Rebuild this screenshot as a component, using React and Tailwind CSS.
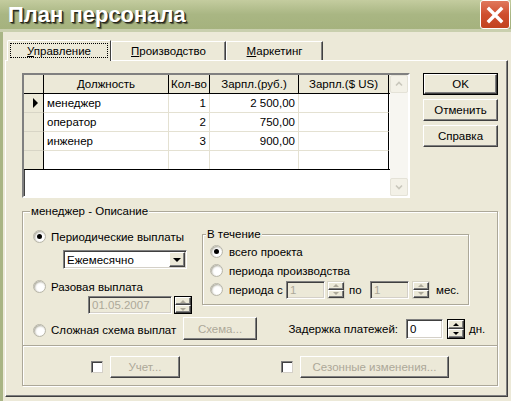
import React from "react";

const raised =
  "border border-t-white border-l-white border-r-[#404040] border-b-[#404040] shadow-[inset_-1px_-1px_0_#808080]";
const sunken =
  "border border-t-[#808080] border-l-[#808080] border-b-white border-r-white shadow-[inset_1px_1px_0_#404040,inset_-1px_-1px_0_#d4d0c8]";

function Radio({ checked }) {
  return (
    <div className="w-[13px] h-[13px] shrink-0 rounded-full bg-white border border-[#b7b5a7] shadow-[inset_1px_1px_2px_#a9a798] flex items-center justify-center">
      {checked && <div className="w-[5px] h-[5px] rounded-full bg-black" />}
    </div>
  );
}

function Check() {
  return (
    <div className="w-[12px] h-[12px] shrink-0 bg-white border border-t-[#808080] border-l-[#808080] border-b-[#d4d0c8] border-r-[#d4d0c8] shadow-[inset_1px_1px_0_#404040]" />
  );
}

function Up({ on }) {
  return (
    <div
      className={
        on
          ? "w-0 h-0 border-x-[3px] border-x-transparent border-b-[3px] border-b-black"
          : "w-0 h-0 border-x-[3px] border-x-transparent border-b-[3px] border-b-[#aca899]"
      }
    />
  );
}
function Down({ on }) {
  return (
    <div
      className={
        on
          ? "w-0 h-0 border-x-[3px] border-x-transparent border-t-[3px] border-t-black"
          : "w-0 h-0 border-x-[3px] border-x-transparent border-t-[3px] border-t-[#aca899]"
      }
    />
  );
}

function Spinner({ size, dark, on }) {
  return (
    <div
      className={`${size} shrink-0 flex flex-col bg-[#ece9d8] ${
        dark ? "border border-black" : "border border-[#d8d5c6]"
      }`}
    >
      <div className={`flex-1 flex items-center justify-center ${raised}`}>
        <Up on={on} />
      </div>
      <div className={`flex-1 flex items-center justify-center ${raised}`}>
        <Down on={on} />
      </div>
    </div>
  );
}

function Btn({ w, children, disabled, def }) {
  const inner = (
    <div
      className={`${def ? "w-full h-full" : w} flex items-center justify-center bg-[#ece9d8] ${raised} ${
        disabled ? "text-[#aca899]" : "text-black"
      }`}
    >
      {children}
    </div>
  );
  if (def) return <div className={`${w} border border-black`}>{inner}</div>;
  return inner;
}

function Cell({ w, children, cls = "" }) {
  return <div className={`${w} shrink-0 h-full flex items-center ${cls}`}>{children}</div>;
}

const rows = [
  ["менеджер", "1", "2 500,00", true],
  ["оператор", "2", "750,00", false],
  ["инженер", "3", "900,00", false],
  ["", "", "", false],
];

function Grid() {
  const dl = "border-r border-b border-r-[#e4e1d2] border-b-[#e4e1d2]";
  return (
    <div className="w-[388px] h-[125px] bg-white border-2 border-t-[#808080] border-l-[#808080] border-b-white border-r-white shadow-[inset_1px_1px_0_#404040] flex">
      <div className="w-[366px] flex flex-col">
        <div className="h-[19px] flex bg-[#ece9d8] border-b border-black">
          <Cell w="w-[20px]" cls="border-r border-black" />
          <Cell w="w-[125px]" cls="border-r border-black justify-center">Должность</Cell>
          <Cell w="w-[41px]" cls="border-r border-black justify-center">Кол-во</Cell>
          <Cell w="w-[89px]" cls="border-r border-black justify-center">Зарпл.(руб.)</Cell>
          <Cell w="w-[90px]" cls="border-r border-black justify-center">Зарпл.($ US)</Cell>
        </div>
        {rows.map((r, i) => {
          const last = i === rows.length - 1;
          return (
            <div key={i} className={`h-[19px] flex ${last ? "border-b border-black" : ""}`}>
              <Cell
                w="w-[20px]"
                cls={`bg-[#ece9d8] border-r border-r-black justify-end pr-[5px] ${last ? "" : "border-b border-b-[#d8d5c6]"}`}
              >
                {r[3] && (
                  <div className="w-0 h-0 border-y-[5px] border-y-transparent border-l-[5px] border-l-black" />
                )}
              </Cell>
              <Cell w="w-[125px]" cls={`pl-[3px] ${last ? "border-r border-r-[#e4e1d2]" : dl}`}>{r[0]}</Cell>
              <Cell w="w-[41px]" cls={`justify-end pr-[3px] ${last ? "border-r border-r-[#e4e1d2]" : dl}`}>{r[1]}</Cell>
              <Cell w="w-[89px]" cls={`justify-end pr-[3px] ${last ? "border-r border-r-[#e4e1d2]" : dl}`}>{r[2]}</Cell>
              <Cell w="w-[90px]" cls={`border-r border-r-black ${last ? "" : "border-b border-b-[#e4e1d2]"}`} />
            </div>
          );
        })}
      </div>
      <div className="w-[18px] flex flex-col justify-between bg-[#f7f6f1]">
        <div className="h-[18px] bg-[#f3f1e7] border border-[#e4e2d7] rounded-[2px] flex items-center justify-center">
          <svg width="8" height="6" viewBox="0 0 8 6">
            <path d="M1 4.5 L4 1.5 L7 4.5" fill="none" stroke="#c9c7bc" strokeWidth="1.6" />
          </svg>
        </div>
        <div className="h-[18px] bg-[#f3f1e7] border border-[#e4e2d7] rounded-[2px] flex items-center justify-center">
          <svg width="8" height="6" viewBox="0 0 8 6">
            <path d="M1 1.5 L4 4.5 L7 1.5" fill="none" stroke="#c9c7bc" strokeWidth="1.6" />
          </svg>
        </div>
      </div>
    </div>
  );
}

function Legend({ children, left }) {
  return (
    <span className={`absolute ${left} top-[-8px] px-[1px] bg-[#ece9d8] leading-[14px]`}>{children}</span>
  );
}

const etched = "border border-[#aca899] shadow-[inset_1px_1px_0_white,1px_1px_0_white]";

function Group() {
  return (
    <div className={`relative ml-[16px] mt-[13px] w-[476px] h-[175px] ${etched} flex flex-col`}>
      <Legend left="left-[7px]">менеджер - Описание</Legend>
      <div className="flex">
        <div className="w-[179px] pl-[10px] pt-[18px] flex flex-col">
          <div className="flex items-center h-[13px] gap-[5px]">
            <Radio checked />
            <span>Периодические выплаты</span>
          </div>
          <div className={`mt-[7px] ml-[30px] w-[124px] h-[19px] bg-white ${sunken} flex items-center`}>
            <span className="pl-[3px] flex-1">Ежемесячно</span>
            <div className={`w-[16px] h-[15px] mr-[1px] bg-[#ece9d8] ${raised} flex items-center justify-center`}>
              <div className="w-0 h-0 border-x-[4px] border-x-transparent border-t-[4px] border-t-black" />
            </div>
          </div>
          <div className="mt-[11px] flex items-center h-[13px] gap-[5px]">
            <Radio />
            <span>Разовая выплата</span>
          </div>
          <div className="mt-[3px] ml-[55px] flex">
            <div className={`w-[84px] h-[18px] ${sunken} bg-[#ece9d8] text-[#aca899] flex items-center pl-[3px]`}>
              01.05.2007
            </div>
            <Spinner size="ml-[2px] w-[18px] h-[18px]" dark />
          </div>
        </div>
        <div className={`relative mt-[22px] w-[267px] h-[71px] ${etched} pl-[7px] pt-[7px] flex flex-col`}>
          <Legend left="left-[3px]">В течение</Legend>
          <div className="h-[19px] flex items-center gap-[6px]">
            <Radio checked />
            <span>всего проекта</span>
          </div>
          <div className="h-[19px] flex items-center gap-[6px]">
            <Radio />
            <span>периода производства</span>
          </div>
          <div className="h-[19px] flex items-center">
            <div className="w-[76px] flex items-center gap-[6px]">
              <Radio />
              <span>периода с</span>
            </div>
            <div className={`w-[39px] h-[18px] ${sunken} bg-[#ece9d8] text-[#aca899] flex items-center pl-[3px]`}>1</div>
            <Spinner size="ml-[2px] w-[18px] h-[18px]" />
            <span className="w-[25px] pl-[4px]">по</span>
            <div className={`w-[39px] h-[18px] ${sunken} bg-[#ece9d8] text-[#aca899] flex items-center pl-[3px]`}>1</div>
            <Spinner size="ml-[3px] w-[18px] h-[18px]" />
            <span className="ml-[6px]">мес.</span>
          </div>
        </div>
      </div>
      <div className="mt-[3px] h-[23px] flex items-center">
        <div className="w-[160px] pl-[10px] pt-[3px] flex items-center gap-[5px]">
          <Radio />
          <span>Сложная схема выплат</span>
        </div>
        <Btn w="w-[74px] h-[23px]" disabled>
          Схема...
        </Btn>
        <div className="w-[149px] flex justify-end pr-[8px]">Задержка платежей:</div>
        <div className={`w-[37px] h-[20px] bg-white ${sunken} flex items-center pl-[3px]`}>0</div>
        <Spinner size="ml-[4px] w-[18px] h-[20px]" dark on />
        <span className="ml-[4px]">дн.</span>
      </div>
      <div className="mt-[5px] h-[2px] border-t border-t-[#aca899] border-b border-b-white" />
      <div className="mt-[9px] h-[22px] pl-[68px] flex items-center">
        <Check />
        <div className="ml-[7px]">
          <Btn w="w-[70px] h-[22px]" disabled>
            Учет...
          </Btn>
        </div>
        <div className="ml-[101px]">
          <Check />
        </div>
        <div className="ml-[7px]">
          <Btn w="w-[149px] h-[22px]" disabled>
            Сезонные изменения...
          </Btn>
        </div>
      </div>
    </div>
  );
}

export default function App() {
  return (
    <div className="w-[511px] h-[401px] overflow-hidden bg-[#ece9d8] flex flex-col font-['Liberation_Sans',Arial,sans-serif] text-[11.5px] leading-[14px] text-black">
      <div className="h-[32px] shrink-0 flex items-start bg-linear-to-b from-[#c4cc9f] via-[#a9b683] to-[#a5b27e] border-b-[3px] border-b-[#c9cfae]">
        <span className="pl-[8px] pt-[2px] text-[22px] leading-[25px] font-bold text-white [text-shadow:1px_1px_0_#24251a,2px_2px_1px_#4b4e38]">
          План персонала
        </span>
        <div className="ml-auto mr-[1px] w-[30px] h-[29px] rounded-[3px] border border-white bg-linear-to-b from-[#e0785c] via-[#cf4e2e] to-[#c2431f] flex items-center justify-center">
          <svg width="18" height="18" viewBox="0 0 18 18">
            <path d="M3 3 L15 15 M15 3 L3 15" stroke="white" strokeWidth="3.4" strokeLinecap="square" />
          </svg>
        </div>
      </div>
      <div className="flex flex-1">
        <div className="w-[3px] bg-[#a9b585]" />
        <div className="flex-1 flex flex-col">
          <div className="mt-[8px] h-[21px] pl-[4px] flex items-end relative z-10">
            <div className="w-[104px] h-[21px] bg-[#ece9d8] border-t border-l border-t-white border-l-white border-r border-r-[#404040] rounded-tl-[2px] p-[2px] pb-[3px]">
              <div className="h-full border border-dotted border-black flex items-center justify-center">
                <span>
                  <span className="underline">У</span>правление
                </span>
              </div>
            </div>
            <div className="w-[115px] h-[19px] mb-[1px] border-t border-l border-t-white border-l-white border-r border-r-[#404040] shadow-[inset_-1px_0_0_#808080] flex items-center justify-center">
              <span>
                <span className="underline">П</span>роизводство
              </span>
            </div>
            <div className="w-[97px] h-[19px] mb-[1px] border-t border-l border-t-white border-l-white border-r border-r-[#404040] shadow-[inset_-1px_0_0_#808080] flex items-center justify-center">
              <span>
                <span className="underline">М</span>аркетинг
              </span>
            </div>
          </div>
          <div className="ml-[2px] mt-[-1px] w-[503px] h-[337px] border border-t-white border-l-white border-r-[#404040] border-b-[#404040] shadow-[inset_-1px_-1px_0_#808080] flex flex-col">
            <div className="flex mt-[12px] ml-[16px]">
              <Grid />
              <div className="ml-[13px] flex flex-col gap-[4px]">
                <Btn w="w-[75px] h-[22px]" def>
                  OK
                </Btn>
                <Btn w="w-[75px] h-[22px]">Отменить</Btn>
                <Btn w="w-[75px] h-[22px]">Справка</Btn>
              </div>
            </div>
            <Group />
          </div>
        </div>
      </div>
    </div>
  );
}
